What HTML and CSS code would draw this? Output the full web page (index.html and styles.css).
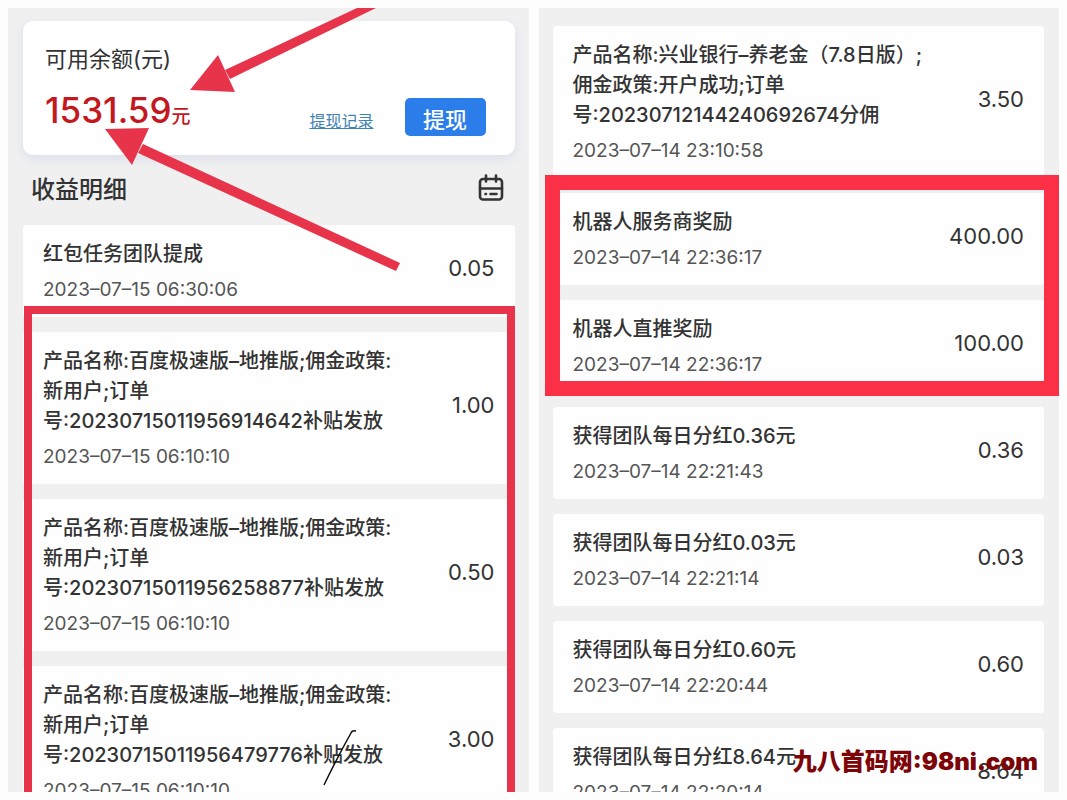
FILE: index.html
```html
<!DOCTYPE html>
<html lang="zh-CN">
<head>
  <meta charset="UTF-8">
  <meta name="viewport" content="width=device-width, initial-scale=1.0">
  <title>收益明细</title>
  <link rel="stylesheet" href="styles.css">
</head>
<body>
  <main class="board">
    <section class="panel">
      <div class="balance-card">
        <p class="balance-label">可用余额(元)</p>
        <div class="balance-row">
          <p class="balance">1531.59<span class="unit">元</span></p>
          <a class="history-link" href="#">提现记录</a>
          <button type="button" class="withdraw">提现</button>
        </div>
      </div>
      <header class="section-head">
        <h1>收益明细</h1>
        <svg class="calendar" viewBox="0 0 26 28" fill="none" stroke="#333" stroke-width="2.6" stroke-linecap="round" stroke-linejoin="round">
          <rect x="2" y="5" width="22" height="20.500" rx="3"/>
          <path d="M2 14.500h22M8 1.500v6M18 1.500v6M7.500 20h.5M12.500 20h6"/>
        </svg>
      </header>
      <ul class="records">
        <li class="record">
          <div class="info">
            <p class="title">红包任务团队提成</p>
            <time class="date">2023–07–15 06:30:06</time>
          </div>
          <span class="amount">0.05</span>
        </li>
      </ul>
      <ul class="records marked marked-open">
        <li class="record">
          <div class="info">
            <p class="title">产品名称:百度极速版–地推版;佣金政策:<br>新用户;订单<br>号:20230715011956914642补贴发放</p>
            <time class="date">2023–07–15 06:10:10</time>
          </div>
          <span class="amount">1.00</span>
        </li>
        <li class="record">
          <div class="info">
            <p class="title">产品名称:百度极速版–地推版;佣金政策:<br>新用户;订单<br>号:20230715011956258877补贴发放</p>
            <time class="date">2023–07–15 06:10:10</time>
          </div>
          <span class="amount">0.50</span>
        </li>
        <li class="record">
          <div class="info">
            <p class="title">产品名称:百度极速版–地推版;佣金政策:<br>新用户;订单<br>号:20230715011956479776补贴发放</p>
            <time class="date">2023–07–15 06:10:10</time>
          </div>
          <span class="amount">3.00</span>
        </li>
      </ul>
      <!-- arrows and pen mark drawn over the list -->
      <svg class="arrows" width="520" height="784" viewBox="8 8 520 784">
        <g fill="#e8344b">
          <path d="M357 8H376L230 79L225 70Z"/>
          <path d="M190 90L218 55L235 92Z"/>
          <path d="M143 144L400 263L396 271L138 153Z"/>
          <path d="M105 129L149 128L132 165Z"/>
        </g>
        <path d="M356 731Q352 730 351 733Q337 758 324 785" fill="none" stroke="#111" stroke-width="1.500"/>
      </svg>
    </section>

    <section class="panel panel-right">
      <ul class="records">
        <li class="record">
          <div class="info">
            <p class="title">产品名称:兴业银行–养老金（7.8日版）;<br>佣金政策:开户成功;订单<br>号:20230712144240692674分佣</p>
            <time class="date">2023–07–14 23:10:58</time>
          </div>
          <span class="amount">3.50</span>
        </li>
      </ul>
      <ul class="records marked marked-closed">
        <li class="record">
          <div class="info">
            <p class="title">机器人服务商奖励</p>
            <time class="date">2023–07–14 22:36:17</time>
          </div>
          <span class="amount">400.00</span>
        </li>
        <li class="record">
          <div class="info">
            <p class="title">机器人直推奖励</p>
            <time class="date">2023–07–14 22:36:17</time>
          </div>
          <span class="amount">100.00</span>
        </li>
      </ul>
      <ul class="records">
        <li class="record">
          <div class="info">
            <p class="title">获得团队每日分红0.36元</p>
            <time class="date">2023–07–14 22:21:43</time>
          </div>
          <span class="amount">0.36</span>
        </li>
        <li class="record">
          <div class="info">
            <p class="title">获得团队每日分红0.03元</p>
            <time class="date">2023–07–14 22:21:14</time>
          </div>
          <span class="amount">0.03</span>
        </li>
        <li class="record">
          <div class="info">
            <p class="title">获得团队每日分红0.60元</p>
            <time class="date">2023–07–14 22:20:44</time>
          </div>
          <span class="amount">0.60</span>
        </li>
        <li class="record">
          <div class="info">
            <p class="title">获得团队每日分红8.64元</p>
            <time class="date">2023–07–14 22:20:14</time>
          </div>
          <span class="amount">8.64</span>
        </li>
      </ul>
    </section>
  </main>
  <p class="watermark">九八首码网:98ni.com</p>
</body>
</html>
```
FILE: styles.css
```css
* {
  margin: 0;
  padding: 0;
  box-sizing: border-box;
}

body {
  font-family: Inter, "Noto Sans CJK SC", sans-serif;
  background-color: #fdfdfd;
  color: #333;
  height: 100vh;
  padding: 8px;
  overflow: hidden;
}

.board {
  display: grid;
  grid-template-columns: 1fr 1fr;
  gap: 10px;
  height: 100%;
}

.panel {
  position: relative;
  display: flex;
  flex-direction: column;
  gap: 15px;
  background-color: #f0f0f1;
  padding: 13px 14px 0 15px;
  overflow: hidden;
}

.panel-right {
  padding: 18px 15px 0 14px;
}

.balance-card {
  background-color: #fff;
  border-radius: 10px;
  padding: 20px 29px 8px 22px;
  box-shadow: 0 4px 10px rgba(190, 200, 225, 0.4);
}

.balance-label {
  font-size: 22px;
  line-height: 36px;
}

.balance-row {
  display: flex;
  align-items: center;
  height: 70px;
  padding-top: 10px;
}

.balance {
  flex: 1;
  font-size: 35px;
  font-weight: 500;
  line-height: 36px;
  padding-bottom: 8px;
  color: #c4181f;
}

.unit {
  font-size: 19px;
}

.history-link {
  color: #3f83b5;
  font-size: 16px;
  line-height: 24px;
  padding-top: 8px;
  margin-right: 31px;
}

.withdraw {
  width: 81px;
  height: 38px;
  border: none;
  border-radius: 5px;
  background-color: #2b7de9;
  color: #fff;
  font-family: inherit;
  font-size: 22px;
  font-weight: 500;
  line-height: 38px;
  padding-top: 3px;
  cursor: pointer;
}

.section-head {
  display: flex;
  justify-content: space-between;
  align-items: center;
  height: 36px;
  padding: 0 11px 0 8px;
  margin-bottom: 5px;
}

.section-head h1 {
  font-size: 24px;
  font-weight: 500;
}

.calendar {
  width: 26px;
  height: 28px;
}

.records {
  list-style: none;
  display: flex;
  flex-direction: column;
  gap: 15px;
}

.record {
  display: flex;
  justify-content: space-between;
  align-items: center;
  background-color: #fefefe;
  border-radius: 4px;
  padding: 14px 20px 12px;
}

.title {
  font-size: 20px;
  font-weight: 500;
  line-height: 30px;
  white-space: nowrap;
}

.date {
  display: block;
  margin-top: 6px;
  font-size: 19px;
  font-weight: 400;
  line-height: 30px;
  color: #555;
}

.amount {
  font-size: 22px;
  font-weight: 400;
  padding-bottom: 9px;
}

/* red frames drawn around groups of records */
.marked {
  position: relative;
}

.marked::after {
  content: "";
  position: absolute;
  pointer-events: none;
}

.marked-open::after {
  inset: -26px 0 0 1px;
  border: 8px solid #e8344b;
  border-bottom: none;
}

.marked-closed::after {
  inset: -18px -15px -4px -8px;
  border: 15px solid #fb3046;
}

.arrows {
  position: absolute;
  top: 0;
  left: 0;
  pointer-events: none;
}

.watermark {
  position: absolute;
  right: 29px;
  bottom: 20px;
  color: #7d0508;
  font-size: 24px;
  font-weight: 900;
  line-height: 36px;
}
```
